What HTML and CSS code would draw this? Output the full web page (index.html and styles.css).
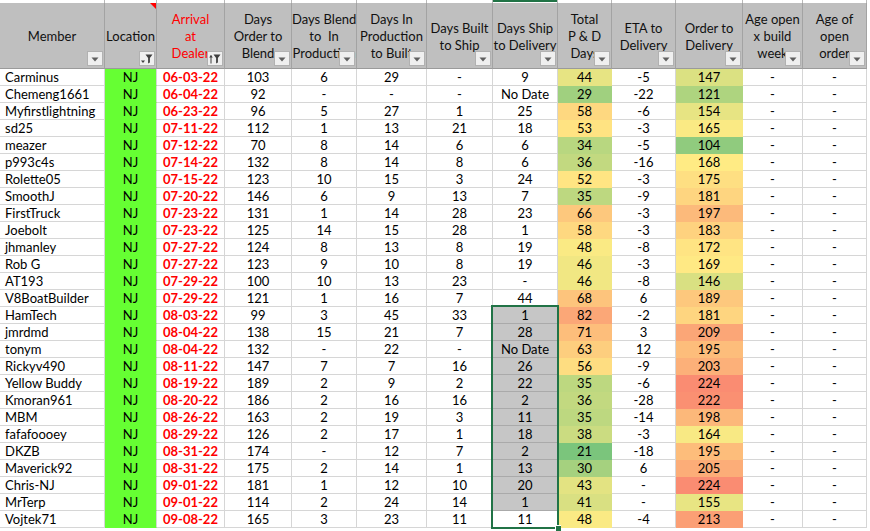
FILE: index.html
```html
<!DOCTYPE html>
<html>
<head>
<meta charset="utf-8">
<link rel="stylesheet" href="styles.css">
</head>
<body>
<div class="wrap">
<table class="sheet">
<colgroup>
<col class="w105"><col class="w52"><col class="w68"><col class="w67"><col class="w65"><col class="w70"><col class="w66"><col class="w65"><col class="w54"><col class="w64"><col class="w67"><col class="w60"><col class="w64">
</colgroup>
<thead>
<tr class="strip"><td></td><td></td><td></td><td></td><td></td><td></td><td></td><td class="act"></td><td></td><td></td><td></td><td></td><td></td></tr>
<tr class="hdr">
<th><div class="lbl">Member</div><span class="btn"><svg width="14" height="13" viewBox="0 0 14 13"><path d="M3.5 5.5h7l-3.5 4z" fill="#5f5f5f"/></svg></span></th>
<th><span class="note"></span><div class="lbl">Location</div><span class="btn"><svg width="14" height="13" viewBox="0 0 14 13"><path d="M5.5 2.5h7l-2.6 3.4v4.6l-1.8 1v-5.6z" fill="#3f3f3f"/><path d="M1 8.5h4l-2 2.5z" fill="#3f3f3f"/></svg></span></th>
<th><div class="lbl red">Arrival<br>at<br>Dealer</div><span class="btn"><svg width="14" height="13" viewBox="0 0 14 13"><path d="M5.5 2.5h7l-2.6 3.4v4.6l-1.8 1v-5.6z" fill="#3f3f3f"/><path d="M3 3.5v8" stroke="#3f3f3f" stroke-width="1"/><path d="M1.2 5.5l1.8-2.4 1.8 2.4z" fill="#3f3f3f"/></svg></span></th>
<th><div class="lbl">Days<br>Order to<br>Blend</div><span class="btn"><svg width="14" height="13" viewBox="0 0 14 13"><path d="M3.5 5.5h7l-3.5 4z" fill="#5f5f5f"/></svg></span></th>
<th><div class="lbl">Days Blend<br>to &nbsp;In<br>Production</div><span class="btn"><svg width="14" height="13" viewBox="0 0 14 13"><path d="M3.5 5.5h7l-3.5 4z" fill="#5f5f5f"/></svg></span></th>
<th><div class="lbl">Days In<br>Production<br>to Built</div><span class="btn"><svg width="14" height="13" viewBox="0 0 14 13"><path d="M3.5 5.5h7l-3.5 4z" fill="#5f5f5f"/></svg></span></th>
<th><div class="lbl">Days Built<br>to Ship</div><span class="btn"><svg width="14" height="13" viewBox="0 0 14 13"><path d="M3.5 5.5h7l-3.5 4z" fill="#5f5f5f"/></svg></span></th>
<th><div class="lbl">Days Ship<br>to Delivery</div><span class="btn"><svg width="14" height="13" viewBox="0 0 14 13"><path d="M3.5 5.5h7l-3.5 4z" fill="#5f5f5f"/></svg></span></th>
<th><div class="lbl">Total<br>P &amp; D<br>Days</div><span class="btn"><svg width="14" height="13" viewBox="0 0 14 13"><path d="M3.5 5.5h7l-3.5 4z" fill="#5f5f5f"/></svg></span></th>
<th><div class="lbl">ETA to<br>Delivery</div><span class="btn"><svg width="14" height="13" viewBox="0 0 14 13"><path d="M3.5 5.5h7l-3.5 4z" fill="#5f5f5f"/></svg></span></th>
<th><div class="lbl">Order to<br>Delivery</div><span class="btn"><svg width="14" height="13" viewBox="0 0 14 13"><path d="M3.5 5.5h7l-3.5 4z" fill="#5f5f5f"/></svg></span></th>
<th><div class="lbl">Age open<br>x build<br>week</div><span class="btn"><svg width="14" height="13" viewBox="0 0 14 13"><path d="M3.5 5.5h7l-3.5 4z" fill="#5f5f5f"/></svg></span></th>
<th><div class="lbl">Age of<br>open<br>order</div><span class="btn"><svg width="14" height="13" viewBox="0 0 14 13"><path d="M3.5 5.5h7l-3.5 4z" fill="#5f5f5f"/></svg></span></th>
</tr>
</thead>
<tbody id="rows"></tbody>
</table>
<div class="selbox"><span class="handle"></span></div>
</div>
<script src="script.js"></script>
</body>
</html>
```

FILE: styles.css
```css
html, body {
  margin: 0;
  padding: 0;
  background: #ffffff;
  overflow: hidden;
}
.wrap {
  position: relative;
  width: 870px;
  height: 531px;
  overflow: hidden;
}
.sheet {
  table-layout: fixed;
  border-collapse: separate;
  border-spacing: 0;
  width: 867px;
  font-family: Lato, "Liberation Sans", sans-serif;
  font-size: 13px;
  color: #000;
}
.w105 { width: 105px; }
.w52 { width: 52px; }
.w68 { width: 68px; }
.w67 { width: 67px; }
.w65 { width: 65px; }
.w70 { width: 70px; }
.w66 { width: 66px; }
.w54 { width: 54px; }
.w64 { width: 64px; }
.w60 { width: 60px; }

.strip td {
  height: 3px;
  padding: 0;
  box-sizing: border-box;
  border-right: 1px solid #b9b9b9;
  background: #fff;
}
.strip td.act {
  background: linear-gradient(#217346 0 2px, #ffffff 2px);
}

.hdr th {
  position: relative;
  height: 66px;
  box-sizing: border-box;
  padding: 0;
  background: #bfbfbf;
  border-right: 1px solid #a3a3a3;
  border-bottom: 1px solid #9a9a9a;
  font-weight: normal;
  vertical-align: middle;
  text-align: center;
  overflow: hidden;
}
.lbl {
  line-height: 17px;
  white-space: nowrap;
  color: #111;
  padding-top: 2px;
}
.lbl.red { color: #ff0000; }
.btn {
  position: absolute;
  right: 1px;
  bottom: 2px;
  width: 16px;
  height: 15px;
  box-sizing: border-box;
  border: 1px solid #b1b1b1;
  background: #efefef;
  display: flex;
  align-items: center;
  justify-content: center;
}
.btn svg { display: block; }
.note {
  position: absolute;
  top: 0;
  right: 0;
  width: 0;
  height: 0;
  border-top: 6px solid #ff0000;
  border-left: 6px solid transparent;
}

tbody td {
  height: 17px;
  box-sizing: border-box;
  padding: 0;
  border-right: 1px solid #d6d6d6;
  border-bottom: 1px solid #d6d6d6;
  text-align: center;
  line-height: 16px;
  white-space: nowrap;
  overflow: hidden;
}
tbody td.mem {
  text-align: left;
  padding-left: 5px;
}
tbody td.loc {
  background: #66ff33;
  border-bottom-color: transparent;
}
tbody td.date {
  color: #ff0000;
  font-weight: bold;
}
tbody td.cs {
  border-bottom-color: transparent;
  border-right-color: transparent;
}
tbody td.sel {
  background: #c6c6c6;
  border-bottom-color: #aaaaaa;
}

.selbox {
  position: absolute;
  left: 491px;
  top: 305px;
  width: 68px;
  height: 224px;
  box-sizing: border-box;
  border: 2px solid #217346;
  pointer-events: none;
}
.handle {
  position: absolute;
  right: -4px;
  bottom: -4px;
  width: 5px;
  height: 5px;
  background: #217346;
  border-left: 1px solid #fff;
  border-top: 1px solid #fff;
}
```

FILE: script.js
```js
var data = [
  ["Carminus","06-03-22","103","6","29","-","9",44,"-5",147],
  ["Chemeng1661","06-04-22","92","-","-","-","No Date",29,"-22",121],
  ["Myfirstlightning","06-23-22","96","5","27","1","25",58,"-6",154],
  ["sd25","07-11-22","112","1","13","21","18",53,"-3",165],
  ["meazer","07-12-22","70","8","14","6","6",34,"-5",104],
  ["p993c4s","07-14-22","132","8","14","8","6",36,"-16",168],
  ["Rolette05","07-15-22","123","10","15","3","24",52,"-3",175],
  ["SmoothJ","07-20-22","146","6","9","13","7",35,"-9",181],
  ["FirstTruck","07-23-22","131","1","14","28","23",66,"-3",197],
  ["Joebolt","07-23-22","125","14","15","28","1",58,"-3",183],
  ["jhmanley","07-27-22","124","8","13","8","19",48,"-8",172],
  ["Rob G","07-27-22","123","9","10","8","19",46,"-3",169],
  ["AT193","07-29-22","100","10","13","23","-",46,"-8",146],
  ["V8BoatBuilder","07-29-22","121","1","16","7","44",68,"6",189],
  ["HamTech","08-03-22","99","3","45","33","1",82,"-2",181],
  ["jmrdmd","08-04-22","138","15","21","7","28",71,"3",209],
  ["tonym","08-04-22","132","-","22","-","No Date",63,"12",195],
  ["Rickyv490","08-11-22","147","7","7","16","26",56,"-9",203],
  ["Yellow Buddy","08-19-22","189","2","9","2","22",35,"-6",224],
  ["Kmoran961","08-20-22","186","2","16","16","2",36,"-28",222],
  ["MBM","08-26-22","163","2","19","3","11",35,"-14",198],
  ["fafafoooey","08-29-22","126","2","17","1","18",38,"-3",164],
  ["DKZB","08-31-22","174","-","12","7","2",21,"-18",195],
  ["Maverick92","08-31-22","175","2","14","1","13",30,"6",205],
  ["Chris-NJ","09-01-22","181","1","12","10","20",43,"-",224],
  ["MrTerp","09-01-22","114","2","24","14","1",41,"-",155],
  ["Vojtek71","09-08-22","165","3","23","11","11",48,"-4",213]
];

function scale(v, min, mid, max) {
  var g = [99,190,123], y = [255,235,132], r = [248,105,107];
  var a, b, t;
  if (v <= mid) { a = g; b = y; t = (v - min) / (mid - min); }
  else { a = y; b = r; t = (v - mid) / (max - mid); }
  t = Math.max(0, Math.min(1, t));
  var c = [0,1,2].map(function (i) { return Math.round(a[i] + (b[i] - a[i]) * t); });
  return "rgb(" + c.join(",") + ")";
}

var tb = document.getElementById("rows");
var html = "";
data.forEach(function (d, i) {
  var sel = (i >= 14 && i <= 25) ? " sel" : "";
  html += "<tr>" +
    "<td class=\"mem\">" + d[0] + "</td>" +
    "<td class=\"loc\">NJ</td>" +
    "<td class=\"date\">" + d[1] + "</td>" +
    "<td>" + d[2] + "</td>" +
    "<td>" + d[3] + "</td>" +
    "<td>" + d[4] + "</td>" +
    "<td>" + d[5] + "</td>" +
    "<td class=\"ship" + sel + "\">" + d[6] + "</td>" +
    "<td class=\"cs\" style=\"background:" + scale(d[7], 16, 49, 112) + "\">" + d[7] + "</td>" +
    "<td>" + d[8] + "</td>" +
    "<td class=\"cs\" style=\"background:" + scale(d[9], 78, 168, 245) + "\">" + d[9] + "</td>" +
    "<td>-</td><td>-</td></tr>";
});
tb.innerHTML = html;
```
